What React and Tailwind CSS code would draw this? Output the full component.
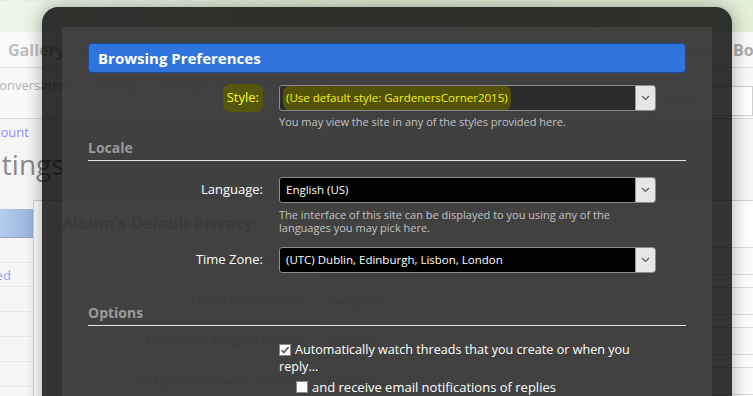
import React from "react";

function Chevron() {
  return (
    <svg width="9" height="6" viewBox="0 0 9 6" fill="none">
      <path d="M1 1l3.5 3.5L8 1" stroke="#555" strokeWidth="1.1" />
    </svg>
  );
}

function Select({ children, dark }) {
  return (
    <div className={`flex h-[26px] w-[377px] items-stretch overflow-hidden rounded-[3px] border border-[#8c8c8c] ${dark ? "bg-[#2c2c2c]" : "bg-black"}`}>
      <div className="flex flex-1 items-center pl-[6px] text-[11.5px] text-white">{children}</div>
      <div className="flex w-[20px] items-center justify-center border-l border-[#9a9a9a] bg-[#e6e6e6]">
        <Chevron />
      </div>
    </div>
  );
}

function Row({ label, children }) {
  return (
    <div className="flex items-start">
      <div className="flex h-[26px] w-[175px] items-center justify-end text-[13px] text-white">{label}</div>
      <div className="ml-[16px]">{children}</div>
    </div>
  );
}

function Heading({ children, className }) {
  return (
    <div className={`border-b border-[#e6e6e6] pb-[2px] text-[14px] font-bold leading-[20px] text-[#9a9a9a] ${className}`}>
      {children}
    </div>
  );
}

function Box({ checked }) {
  return (
    <span className="mr-[4px] inline-flex h-[12px] w-[12px] translate-y-[1px] items-center justify-center border border-[#8a8a8a] bg-white align-baseline">
      {checked && (
        <svg width="10" height="10" viewBox="0 0 10 10" fill="none">
          <path d="M1.5 5.2l2.3 2.3L8.6 2" stroke="#444" strokeWidth="1.4" />
        </svg>
      )}
    </span>
  );
}

export default function App() {
  return (
    <div className="relative h-[396px] w-[753px] overflow-hidden bg-[#f6f6f6] font-['Open_Sans',sans-serif]">
      {/* page behind the overlay */}
      <div className="h-[32px] overflow-hidden bg-gradient-to-r from-[#eef5e7] via-[#dce8cf] to-[#e4efd8]">
        <div className="-ml-[12px] -mt-[35px] whitespace-nowrap text-[40px] font-bold leading-none text-[#cdd8c1] blur-[1px]">
          Gardeners Corner
        </div>
      </div>
      <div className="flex h-[36px] items-center justify-between border-b border-[#dcdcdc] bg-[#fafafa] pl-[8px] text-[16px] font-bold text-[#bdbdbd]">
        <div className="flex gap-[18px]">
          <span>Gallery</span>
          <span>Discussions</span>
        </div>
        <div className="-mr-[71px] flex gap-[21px] text-[#ababab]">
          <span>Inbox</span>
          <span>Bookmarks</span>
        </div>
      </div>
      <div className="flex h-[51px] items-start border-b border-[#dcdcdc] bg-[#f9f9f9] pt-[8px] text-[13px] text-[#b5b5b5]">
        <div className="-ml-[9px] flex gap-[21px]">
          <span>Conversations</span>
          <span>Ratings</span>
          <span>Ratings Given</span>
          <span>Bookmarks</span>
        </div>
        <div className="ml-auto mt-[10px] flex h-[30px] w-[105px] items-center border border-[#cfcfcf] bg-white pl-[12px] italic text-[#bbbbbb]">
          Search...
        </div>
      </div>
      <div className="-ml-[52px] pt-[4px] text-[13px] leading-[18px] text-[#8c8cff]">Your Account</div>
      <div className="-ml-[31px] mt-[6px] text-[28px] leading-[34px] text-[#8a8a8a]">Ratings</div>
      <div className="mt-[19px] flex">
        <div className="w-[33px] shrink-0 overflow-hidden pt-[9px] text-[13px]">
          <div className="h-[29px] border-b border-[#9aa6bb] bg-gradient-to-r from-[#b6ccef] to-[#9ab3de]" />
          <div className="h-[25px] border-b border-[#e6e6e6]" />
          <div className="-ml-[34px] h-[24px] whitespace-nowrap border-b border-[#e6e6e6] leading-[24px] text-[#9a9aff]">Starred</div>
          <div className="h-[25px] border-b border-[#e6e6e6]" />
          <div className="h-[25px] border-b border-[#e6e6e6]" />
          <div className="h-[25px] border-b border-[#e6e6e6]" />
          <div className="h-[25px] border-b border-[#e6e6e6]" />
        </div>
        <div className="h-[220px] flex-1 overflow-hidden border-l border-t border-[#d2d2d2] bg-white pl-[28px] pt-[11px]">
          <div className="text-[16px] font-bold leading-[22px] text-[#555]">Album's Default Privacy</div>
          <div className="mt-[13px] flex flex-col gap-[12px] text-[13px] text-[#666]">
            {[
              ["Able to view:", "Everyone"],
              ["Leave a comment:", "Everyone"],
              ["Download Original Photo:", "Only Me"],
              ["Add photos to your albums:", "Only Me"],
            ].map(([l, v]) => (
              <div key={l} className="flex items-center">
                <div className="w-[240px] shrink-0 text-right">{l}</div>
                <div className="ml-[16px] flex h-[28px] w-[460px] shrink-0 items-center rounded-[3px] border border-[#dadada] bg-[#fcfcfc] pl-[9px]">
                  {v}
                </div>
              </div>
            ))}
          </div>
        </div>
      </div>

      {/* overlay */}
      <div className="absolute left-[42px] top-[7px] h-[420px] w-[690px] rounded-t-[16px] bg-black/80 px-[20px] pt-[20px] shadow-[0_0_18px_rgba(0,0,0,0.35)]">
        <div className="h-full bg-[rgba(69,69,69,0.8)] px-[26px] pt-[16px]">
          <div className="flex h-[30px] items-center rounded-[4px] border border-[#1d4d99] bg-[#2f73dc] px-[9px] text-[15px] font-bold text-white">
            Browsing Preferences
          </div>

          <div className="mt-[12px]">
            <Row
              label={<span className="rounded-[7px] bg-[#56560c] px-[4px] py-[4px] text-[#ffff00]">Style:</span>}
            >
              <Select dark>
                <span className="-ml-[3px] rounded-[8px] bg-[#52520a] px-[3px] py-[4px] text-[#f4f400]">
                  (Use default style: GardenersCorner2015)
                </span>
              </Select>
              <div className="mt-[4px] text-[11px] leading-[14px] text-[#c2c2c2]">
                You may view the site in any of the styles provided here.
              </div>
            </Row>
          </div>

          <Heading className="mt-[9px]">Locale</Heading>

          <div className="mt-[16px]">
            <Row label="Language:">
              <Select>English (US)</Select>
              <div className="mt-[5px] w-[377px] text-[11px] leading-[13px] text-[#c2c2c2]">
                The interface of this site can be displayed to you using any of the
                <br />
                languages you may pick here.
              </div>
            </Row>
          </div>

          <div className="mt-[13px]">
            <Row label="Time Zone:">
              <Select>(UTC) Dublin, Edinburgh, Lisbon, London</Select>
            </Row>
          </div>

          <Heading className="mt-[30px]">Options</Heading>

          <div className="ml-[191px] mt-[15px] text-[13px] leading-[17px] text-white">
            <div className="text-[12.6px]">
              <Box checked />
              Automatically watch threads that you create or when you
              <br />
              reply...
            </div>
            <div className="mt-[4px] pl-[17px]">
              <Box />
              and receive email notifications of replies
            </div>
          </div>
        </div>
      </div>
    </div>
  );
}
